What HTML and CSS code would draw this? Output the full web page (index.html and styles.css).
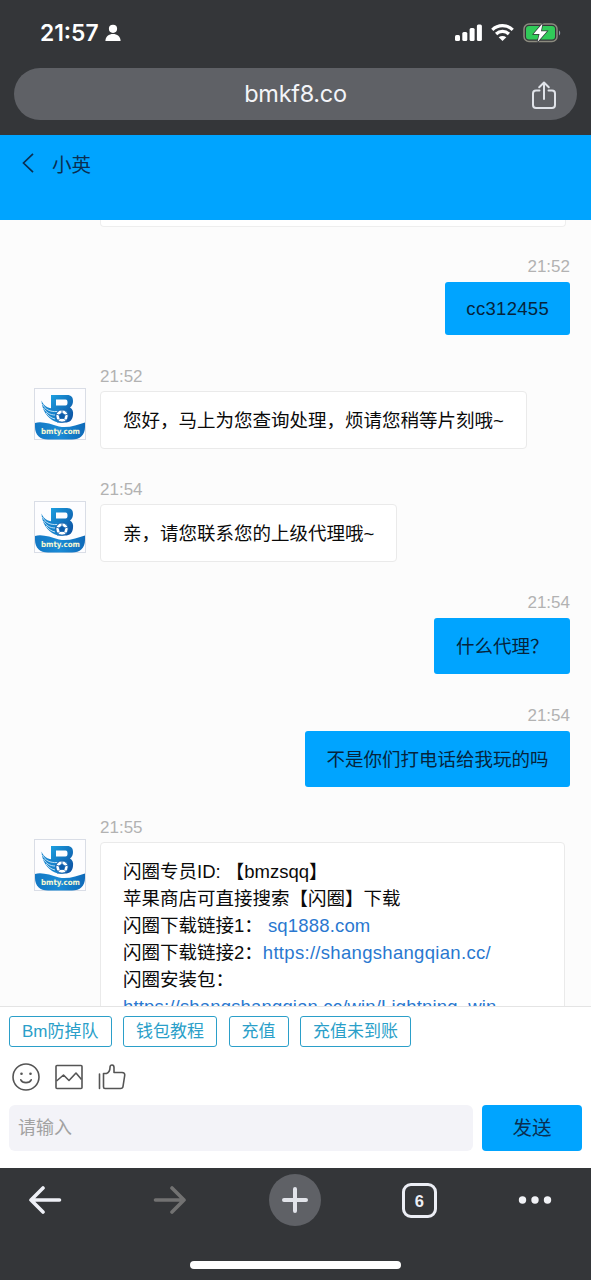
FILE: index.html
```html
<!DOCTYPE html>
<html lang="zh-CN">
<head>
<meta charset="utf-8">
<title>小英</title>
<link rel="stylesheet" href="styles.css">
</head>
<body>
<svg class="defs" width="0" height="0" aria-hidden="true">
  <defs>
    <linearGradient id="blueGrad" x1="0" y1="0" x2="1" y2="1">
      <stop offset="0" stop-color="#1c9fe0"/>
      <stop offset="1" stop-color="#0b4c9e"/>
    </linearGradient>
    <linearGradient id="waveGrad" x1="0" y1="0" x2="1" y2="0">
      <stop offset="0" stop-color="#1378c4"/>
      <stop offset=".5" stop-color="#1a8bd6"/>
      <stop offset="1" stop-color="#0f6ab8"/>
    </linearGradient>
    <symbol id="logo" viewBox="0 0 52 52">
      <rect x=".5" y=".5" width="51" height="51" fill="#fdfdff" stroke="#d9dde6"/>
      <path d="M1 35C8 33 16 36 25 38.500C34 40.500 43 37 51 34.500V39C51 47 46 51.500 38 51.500H14C6 51.500 1 47 1 39Z" fill="url(#waveGrad)"/>
      <path fill-rule="evenodd" d="M17 7H33C37.500 7 39 9.500 39 13C39 16 38 18 36 19.500C38.500 21 39.500 23.500 39 27C38.500 32 36 34.500 31 34.500H23L20 21H17ZM22 11.500V17.500H31.500C33 17.500 33.500 16.500 33.500 14.500C33.500 12.500 33 11.500 31.500 11.500Z" fill="url(#blueGrad)"/>
      <path d="M7.500 12.500C10 19 15 21 25 21C31 21 35 24 34 29C33 34 27 36 21 33.500C13 30 8 22 7.500 12.500Z" fill="#1683cc"/>
      <path d="M8.500 16C11 21.500 16 24 23 23.500M9.500 20C12 24.500 16 27 21 27M12 25C14.500 28 17 30 21 31" fill="none" stroke="#e9f6ff" stroke-width=".8"/>
      <circle cx="28" cy="28" r="6.200" fill="#fff" stroke="#0d5cab" stroke-width="1"/>
      <path d="M28 25L31 27L30 30.400H26L25 27ZM28 22V25M34 26L31 27M32 32.500L30 30.400M24 32.500L26 30.400M22 26L25 27" fill="#0d5cab" stroke="#0d5cab" stroke-width=".8"/>
      <text x="26.500" y="46.300" text-anchor="middle" textLength="39" lengthAdjust="spacingAndGlyphs" class="logo-text">bmty.com</text>
    </symbol>
  </defs>
</svg>

<div class="phone">
  <div class="browser-top">
    <div class="status">
      <div class="status-left">
        <span class="clock">21:57</span>
        <svg width="16" height="18" viewBox="0 0 16 18" fill="#fff"><circle cx="8" cy="4.800" r="4.100"/><path d="M.4 17C.4 12.500 4 10 8 10S15.600 12.500 15.600 17Z"/></svg>
      </div>
      <svg class="status-icons" width="106" height="20" viewBox="0 0 106 20">
        <g fill="#fff">
          <rect x="0" y="12" width="5" height="6" rx="1.500"/>
          <rect x="7.300" y="9" width="5" height="9" rx="1.500"/>
          <rect x="14.600" y="5" width="5" height="13" rx="1.500"/>
          <rect x="21.900" y="1.500" width="5" height="16.500" rx="1.500"/>
          <path d="M47.500 18L43.700 14.200C46 12.500 49 12.500 51.300 14.200Z"/>
        </g>
        <path d="M37.300 6.800C43 1.200 52 1.200 57.700 6.800M41.100 11C44.800 7.500 50.200 7.500 53.900 11" fill="none" stroke="#fff" stroke-width="3.200"/>
        <rect x="69" y="1" width="33" height="17.500" rx="5" fill="none" stroke="#8c8b7f" stroke-width="1.500"/>
        <rect x="71" y="3" width="29" height="13.500" rx="3" fill="#31ca59"/>
        <path d="M104 7.500C105.600 8.300 105.600 11.700 104 12.500Z" fill="#8b98a5"/>
        <path d="M87.500 .5L78.500 11H84.500L82.500 19L92 8.300H86Z" fill="#fff" stroke="#343639" stroke-width="1.400" paint-order="stroke"/>
      </svg>
    </div>
    <div class="address">
      <span class="url">bmkf8.co</span>
      <svg class="share" width="26" height="30" viewBox="0 0 26 30" fill="none" stroke="#e0e3e9" stroke-width="2" stroke-linecap="round" stroke-linejoin="round"><path d="M8.500 10.500H5Q2 10.500 2 13.500V25Q2 28 5 28H21Q24 28 24 25V13.500Q24 10.500 21 10.500H17.500M13 19V3M8.200 7.200L13 2.500L17.800 7.200"/></svg>
    </div>
  </div>

  <header class="chat-header">
    <svg width="12" height="20" viewBox="0 0 12 20" fill="none" stroke="#0a2f52" stroke-width="1.700"><path d="M11 .8L1.500 10L11 19.200"/></svg>
    <span class="name">小英</span>
  </header>

  <main class="chat">
    <div class="previous"></div>
    <section class="msg mine">
      <time>21:52</time>
      <div class="bubble compact"><span class="account">cc312455</span></div>
    </section>
    <section class="msg agent">
      <svg class="avatar"><use href="#logo"/></svg>
      <div class="content">
        <time>21:52</time>
        <div class="bubble">您好，马上为您查询处理，烦请您稍等片刻哦~</div>
      </div>
    </section>
    <section class="msg agent">
      <svg class="avatar"><use href="#logo"/></svg>
      <div class="content">
        <time>21:54</time>
        <div class="bubble">亲，请您联系您的上级代理哦~</div>
      </div>
    </section>
    <section class="msg mine">
      <time>21:54</time>
      <div class="bubble">什么代理？</div>
    </section>
    <section class="msg mine last-mine">
      <time>21:54</time>
      <div class="bubble">不是你们打电话给我玩的吗</div>
    </section>
    <section class="msg agent">
      <svg class="avatar"><use href="#logo"/></svg>
      <div class="content">
        <time>21:55</time>
        <div class="bubble long">
          <p>闪圈专员ID: 【bmzsqq】</p>
          <p>苹果商店可直接搜索【闪圈】下载</p>
          <p>闪圈下载链接1： <a>sq1888.com</a></p>
          <p>闪圈下载链接2：<a class="site">https://shangshangqian.cc/</a></p>
          <p>闪圈安装包：</p>
          <p><a>https://shangshangqian.cc/win/Lightning_win</a></p>
        </div>
      </div>
    </section>
  </main>

  <footer class="composer">
    <div class="tags">
      <span class="tag">Bm防掉队</span><span class="tag">钱包教程</span><span class="tag">充值</span><span class="tag">充值未到账</span>
    </div>
    <div class="tools">
      <svg width="28" height="28" viewBox="0 0 28 28" fill="none" stroke="#555" stroke-width="1.600"><circle cx="14" cy="14" r="13"/><path d="M8.800 16.800C10.500 20.500 17.500 20.500 19.200 16.800" stroke-linecap="round"/><circle cx="9.500" cy="10.800" r="1.300" fill="#555" stroke="none"/><circle cx="18.500" cy="10.800" r="1.300" fill="#555" stroke="none"/></svg>
      <svg width="28" height="28" viewBox="0 0 28 28" fill="none" stroke="#555" stroke-width="1.600" stroke-linejoin="round"><rect x="1" y="2.500" width="26" height="23" rx="1"/><path d="M1.500 18L8.500 12L14 17.500L21 10L26.500 16.500"/></svg>
      <svg width="28" height="28" viewBox="0 0 28 28" fill="none" stroke="#555" stroke-width="1.600" stroke-linejoin="round" stroke-linecap="round"><path d="M1.500 11V25.500M5.500 10.500H8.500C11 9.500 12 7.500 12 4.500C12 1 16 1.200 16 4.500V9.500H24C26 9.500 27 10.500 26.700 12.500L25 23.500Q24.700 25.500 22.500 25.500H7Q5.500 25.500 5.500 24Z"/></svg>
    </div>
    <div class="entry">
      <div class="input">请输入</div>
      <div class="send">发送</div>
    </div>
  </footer>

  <nav class="browser-bottom">
    <div class="nav-row">
      <svg class="back" width="34" height="28" viewBox="0 0 34 28" fill="none" stroke="#eef0f6" stroke-width="3.600" stroke-linecap="round" stroke-linejoin="round"><path d="M31.500 14H3M15 2L3 14L15 26"/></svg>
      <svg width="34" height="28" viewBox="0 0 34 28" fill="none" stroke="#727272" stroke-width="3.600" stroke-linecap="round" stroke-linejoin="round"><path d="M2.500 14H31M19 2L31 14L19 26"/></svg>
      <div class="plus"><svg width="28" height="28" viewBox="0 0 28 28" stroke="#e2e4ea" stroke-width="4" stroke-linecap="round"><path d="M14 3V25M3 14H25"/></svg></div>
      <div class="tabs">6</div>
      <svg width="34" height="10" viewBox="0 0 34 10" fill="#f1f2f6"><circle cx="4.500" cy="5" r="3.700"/><circle cx="17" cy="5" r="3.700"/><circle cx="29.500" cy="5" r="3.700"/></svg>
    </div>
    <div class="home-bar"></div>
  </nav>
</div>
</body>
</html>
```
FILE: styles.css
```css
* { box-sizing: border-box; }
body {
  margin: 0;
  background: #fcfcfc;
  font-family: "Liberation Sans", "Noto Sans CJK SC", sans-serif;
}
p { margin: 0; }
svg { display: block; flex: none; }
.defs { position: absolute; }
.phone {
  width: 591px;
  height: 1280px;
  display: flex;
  flex-direction: column;
  overflow: hidden;
}

.browser-top {
  height: 135px;
  flex: none;
  background: #343639;
  padding: 14px 14px 0;
}
.status {
  height: 37px;
  display: flex;
  align-items: center;
  justify-content: space-between;
  padding: 0 16px 0 26px;
}
.status-left { display: flex; align-items: center; gap: 6px; }
.clock {
  font: 600 22.800px/37px Inter, sans-serif;
  color: #fff;
  width: 59px;
  white-space: nowrap;
}
.address {
  margin-top: 17px;
  height: 52px;
  border-radius: 26px;
  background: #5f6166;
  display: grid;
  grid-template-columns: 1fr auto 1fr;
  align-items: center;
  padding: 0 20px;
}
.url {
  grid-column: 2;
  font: 400 23.500px/50px Inter, sans-serif;
  letter-spacing: -.3px;
  color: #f3f4f8;
}
.share { justify-self: end; margin-top: 2px; }

.chat-header {
  height: 85px;
  flex: none;
  background: #00a4ff;
  display: flex;
  align-items: flex-start;
  gap: 18px;
  padding: 18px 22px;
}
.name {
  font-size: 19.500px;
  line-height: 24px;
  color: #0a2f52;
}

.chat {
  height: 786px;
  flex: none;
  overflow: hidden;
  background: #fcfcfc;
  font-size: 18.500px;
}
.previous {
  height: 7px;
  margin: 0 25px 28px 100px;
  background: #fff;
  border: 1px solid #eee;
  border-top: 0;
  border-radius: 0 0 4px 4px;
}
time {
  display: block;
  font-size: 17px;
  line-height: 24px;
  color: #b2b2b2;
}
.mine {
  display: flex;
  flex-direction: column;
  align-items: flex-end;
  gap: 3px;
  padding-right: 21px;
  margin-bottom: 30px;
}
.last-mine { margin-bottom: 29px; }
.mine .bubble {
  height: 56px;
  padding: 0 21.600px;
  border-radius: 3px;
  background: #00a4ff;
  color: #06243c;
  line-height: 57px;
}
.mine .compact { height: 53px; line-height: 54px; padding: 0 21px; }
.account { letter-spacing: .3px; }
.agent {
  display: flex;
  gap: 14px;
  padding-left: 34px;
  margin-bottom: 29px;
}
.avatar { width: 52px; height: 52px; margin-top: 23px; }
.logo-text {
  font: 700 7.800px "DejaVu Sans", sans-serif;
  fill: #f4f7d4;
}
.agent .bubble {
  height: 58px;
  margin-top: 2px;
  width: max-content;
  padding: 0 22px;
  border: 1px solid #eaeaea;
  border-radius: 4px;
  background: #fff;
  color: #0a0a0a;
  line-height: 58px;
}
.agent .long {
  width: 465px;
  height: 300px;
  padding-top: 15px;
  line-height: 27px;
}
.long p { height: 27px; white-space: nowrap; }
.long a { color: #2a78d0; letter-spacing: .17px; }
.long .site { letter-spacing: .31px; }

.composer {
  height: 162px;
  flex: none;
  background: #fff;
  border-top: 1px solid #e4e4e4;
  padding: 9px 9px 0;
}
.tags { display: flex; gap: 11.500px; height: 31px; }
.tag {
  border: 1.500px solid #2b9fc9;
  border-radius: 3px;
  padding: 0 12px;
  font-size: 17px;
  line-height: 29px;
  color: #2b9fc9;
  white-space: nowrap;
}
.tools { display: flex; gap: 15px; padding: 16px 2.500px 0; }
.entry { display: flex; gap: 9px; margin-top: 14px; }
.input {
  width: 465px;
  height: 46px;
  border-radius: 6px;
  background: #f3f3f8;
  padding-left: 9px;
  font-size: 18px;
  line-height: 47px;
  color: #a2a2a2;
}
.send {
  width: 100px;
  height: 46px;
  border-radius: 4px;
  background: #00a4ff;
  color: #0a2f52;
  font-size: 19.500px;
  line-height: 47px;
  text-align: center;
}

.browser-bottom {
  height: 112px;
  flex: none;
  background: #343639;
  padding-top: 6px;
}
.nav-row {
  height: 52px;
  display: flex;
  align-items: center;
  justify-content: space-between;
  padding: 0 39px 0 28px;
}
.back { margin-right: 10px; }
.plus {
  width: 52px;
  height: 52px;
  border-radius: 50%;
  background: #5f6166;
  display: grid;
  place-items: center;
}
.tabs {
  width: 35px;
  height: 35px;
  border: 3px solid #eceef5;
  border-radius: 9px;
  color: #eceef5;
  font: 700 16.500px/30px "Liberation Sans", sans-serif;
  text-align: center;
}
.home-bar {
  width: 211px;
  height: 8px;
  border-radius: 4px;
  background: #fff;
  margin: 35px auto 0;
}
```
